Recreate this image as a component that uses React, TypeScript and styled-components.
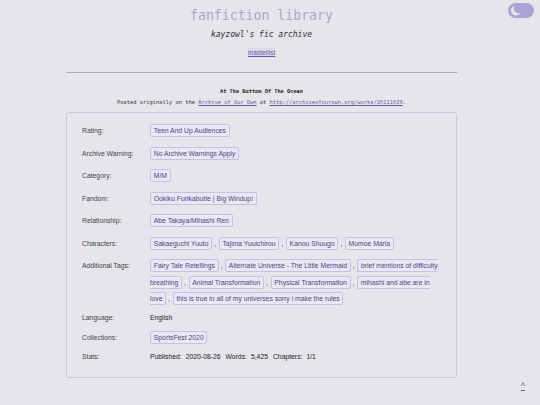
import { Fragment } from "react";
import styled, { createGlobalStyle } from "styled-components";

const GlobalStyle = createGlobalStyle`
  html, body {
    margin: 0;
    padding: 0;
    background-color: #e6e5ec;
  }
  body {
    font-family: "Liberation Sans", Arial, sans-serif;
    color: #333;
  }
`;

const Page = styled.div`
  width: 523px;
  min-height: 405px;
  display: flex;
  flex-direction: column;
  align-items: center;
`;

const Header = styled.header`
  width: 391px;
  display: flex;
  flex-direction: column;
  align-items: center;
  padding-top: 7px;
`;

const SiteTitle = styled.h1`
  margin: 0;
  font-family: "DejaVu Sans Mono", monospace;
  font-weight: 400;
  font-size: 13.2px;
  line-height: 18px;
  color: #a9a5d3;
`;

const Subtitle = styled.h2`
  margin: 4px 0 0;
  font-family: "DejaVu Sans Mono", monospace;
  font-style: italic;
  font-weight: 400;
  font-size: 8px;
  line-height: 12px;
  color: #333;
`;

const NavLink = styled.a`
  margin-top: 7px;
  font-size: 6.4px;
  line-height: 9px;
  color: #625d9c;
  background-color: #dcd9ea;
  text-decoration: underline;
`;

const Rule = styled.hr`
  width: 391px;
  margin: 15px 0 0;
  border: 0;
  border-top: 1px solid #aaa6d4;
`;

const WorkHeading = styled.div`
  margin-top: 14px;
  font-family: "DejaVu Sans Mono", monospace;
  font-weight: 700;
  font-size: 5.3px;
  line-height: 8px;
  color: #222;
`;

const Posted = styled.div`
  margin-top: 3px;
  font-family: "DejaVu Sans Mono", monospace;
  font-size: 5.4px;
  line-height: 8px;
  color: #333;
  a {
    color: #625d9c;
    text-decoration: underline;
  }
`;

const MetaBox = styled.dl`
  box-sizing: border-box;
  width: 391px;
  margin: 6px 0 0;
  padding: 10px 0 11px 15px;
  border: 1px solid #c9c6e6;
  border-radius: 3px;
  display: grid;
  grid-template-columns: 68px 307px;
  font-size: 6.8px;
  line-height: 16.5px;
`;

const Label = styled.dt<{ $space: number }>`
  margin: 0;
  padding-bottom: ${(p) => p.$space}px;
  color: #444;
`;

const Value = styled.dd<{ $space: number }>`
  margin: 0;
  padding-bottom: ${(p) => p.$space}px;
  color: #222;
`;

const Tag = styled.a`
  padding: 2px 2.8px;
  border: 1px solid #c4c0e6;
  border-radius: 2px;
  background-color: #e9e7f4;
  color: #4c487e;
  text-decoration: none;
`;

const Comma = styled.span`
  margin: 0 2.5px 0 2px;
  color: #444;
`;

const StatName = styled.span`
  margin-right: 4px;
`;

const StatValue = styled.span`
  margin-right: 5px;
`;

const ThemeToggle = styled.button`
  position: fixed;
  top: 3px;
  right: 6px;
  width: 26px;
  height: 15px;
  padding: 0;
  border: 0;
  background: none;
  display: block;
  cursor: pointer;
`;

const TopLink = styled.a`
  position: fixed;
  right: 15px;
  bottom: 14px;
  font-size: 9px;
  line-height: 10px;
  color: #625d9c;
  text-decoration: underline;
`;

type Meta = { label: string; tags?: string[]; text?: string; space: number };

const meta: Meta[] = [
  { label: "Rating:", tags: ["Teen And Up Audiences"], space: 6 },
  { label: "Archive Warning:", tags: ["No Archive Warnings Apply"], space: 6 },
  { label: "Category:", tags: ["M/M"], space: 6 },
  { label: "Fandom:", tags: ["Ookiku Furikabutte | Big Windup!"], space: 6 },
  { label: "Relationship:", tags: ["Abe Takaya/Mihashi Ren"], space: 6 },
  {
    label: "Characters:",
    tags: ["Sakaeguchi Yuuto", "Tajima Yuuichirou", "Kanou Shuugo", "Momoe Maria"],
    space: 6,
  },
  {
    label: "Additional Tags:",
    tags: [
      "Fairy Tale Retellings",
      "Alternate Universe - The Little Mermaid",
      "brief mentions of difficulty breathing",
      "Animal Transformation",
      "Physical Transformation",
      "mihashi and abe are in love",
      "this is true in all of my universes sorry i make the rules",
    ],
    space: 2.5,
  },
  { label: "Language:", text: "English", space: 3.5 },
  { label: "Collections:", tags: ["SportsFest 2020"], space: 2.5 },
];

const stats = [
  ["Published:", "2020-08-26"],
  ["Words:", "5,425"],
  ["Chapters:", "1/1"],
];

function App() {
  return (
    <>
      <GlobalStyle />
      <Page>
        <Header>
          <SiteTitle>fanfiction library</SiteTitle>
          <Subtitle>kayzowl's fic archive</Subtitle>
          <NavLink href="#">masterlist</NavLink>
          <Rule />
          <WorkHeading>At The Bottom Of The Ocean</WorkHeading>
          <Posted>
            Posted originally on the <a href="#">Archive of Our Own</a> at{" "}
            <a href="#">http://archiveofourown.org/works/26111629</a>.
          </Posted>
        </Header>
        <MetaBox>
          {meta.map((row) => (
            <Fragment key={row.label}>
              <Label $space={row.space}>{row.label}</Label>
              <Value $space={row.space}>
                {row.text}
                {row.tags?.map((tag, i) => (
                  <span key={tag}>
                    <Tag href="#">{tag}</Tag>
                    {i < row.tags!.length - 1 && <Comma>,</Comma>}
                  </span>
                ))}
              </Value>
            </Fragment>
          ))}
          <Label $space={0}>Stats:</Label>
          <Value $space={0}>
            {stats.map(([name, value]) => (
              <span key={name}>
                <StatName>{name}</StatName>
                <StatValue>{value}</StatValue>
              </span>
            ))}
          </Value>
        </MetaBox>
      </Page>
      <ThemeToggle aria-label="toggle theme">
        <svg width="26" height="15" viewBox="0 0 26 15">
          <rect x="0" y="0" width="26" height="15" rx="7.5" fill="#a9a5d3" />
          <circle cx="8" cy="7.5" r="5" fill="#e6e5ec" />
          <circle cx="10.3" cy="5.6" r="4.6" fill="#a9a5d3" />
        </svg>
      </ThemeToggle>
      <TopLink href="#">^</TopLink>
    </>
  );
}

export default App;
